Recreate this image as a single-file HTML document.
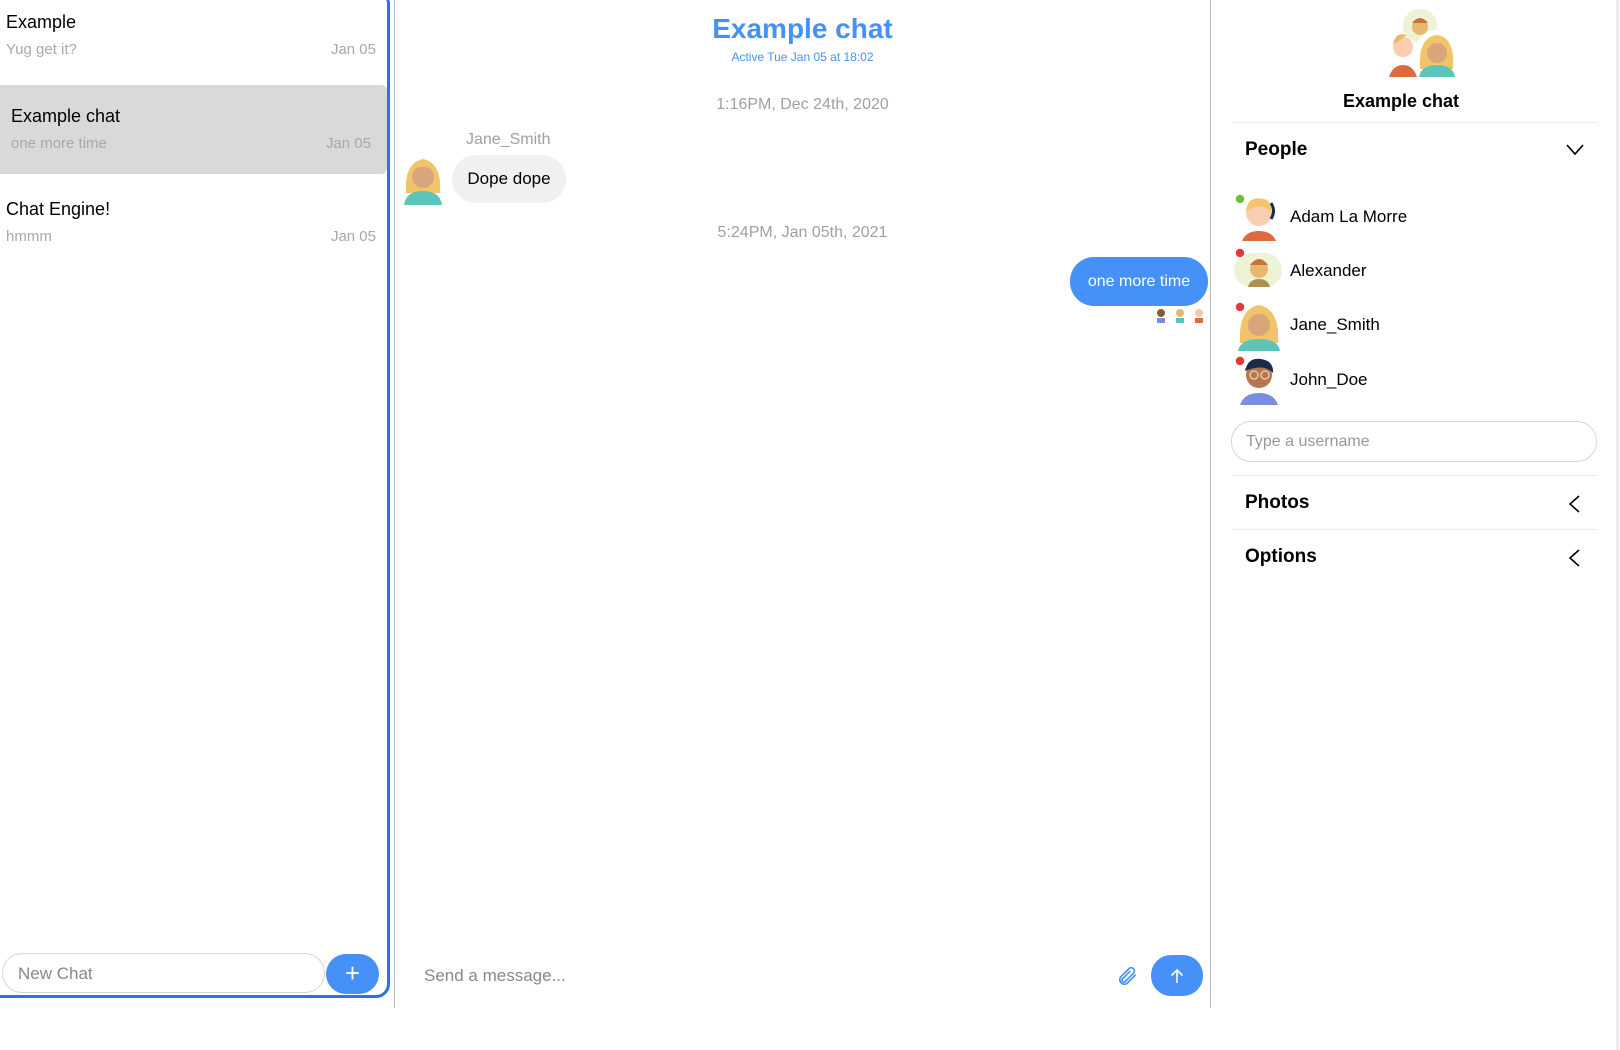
<!DOCTYPE html>
<html><head><meta charset="utf-8"><style>
*{margin:0;padding:0;box-sizing:border-box}
body{width:1620px;height:1050px;background:#fff;font-family:"Liberation Sans",sans-serif;position:relative;overflow:hidden;color:#000}
.a{position:absolute;white-space:nowrap}
.t{font-size:18px;line-height:20px}
.s{font-size:15px;color:#a8a8a8;line-height:18px}
.name{font-size:17px;line-height:20px}
.hdr{font-size:19px;font-weight:bold;line-height:22px}
</style></head><body>
<div class="a" style="left:-10px;top:-10px;width:400px;height:1008px;border:3px solid #2f6ff5;border-radius:0 14px 14px 0;"></div>
<div class="a t" style="left:6px;top:12px">Example</div>
<div class="a s" style="left:6px;top:41px">Yug get it?</div>
<div class="a s" style="right:1244px;top:41px">Jan 05</div>
<div class="a" style="left:0;top:85px;width:387px;height:89px;background:#d9d9d9;border-radius:0 6px 6px 0"></div>
<div class="a t" style="left:11px;top:106px">Example chat</div>
<div class="a s" style="left:11px;top:135px">one more time</div>
<div class="a s" style="right:1249px;top:135px">Jan 05</div>
<div class="a t" style="left:6px;top:199px">Chat Engine!</div>
<div class="a s" style="left:6px;top:228px">hmmm</div>
<div class="a s" style="right:1244px;top:228px">Jan 05</div>
<div class="a" style="left:2px;top:953px;width:323px;height:40px;border:1px solid #d6d6d6;border-radius:20px;font-size:17px;color:#888;padding:10px 15px">New Chat</div>
<div class="a" style="left:326px;top:954px;width:53px;height:40px;background:#4591f7;border-radius:20px;color:#fff;font-size:26px;line-height:38px;text-align:center;font-weight:300">+</div>
<div class="a" style="left:394px;top:0;width:1px;height:1008px;background:#bdbdbd"></div>
<div class="a" style="left:1210px;top:0;width:1px;height:1008px;background:#bdbdbd"></div>
<div class="a" style="left:1616px;top:0;width:3px;height:1050px;background:#ececec"></div>
<div class="a" style="left:395px;width:815px;top:12px;text-align:center;font-size:28px;font-weight:bold;color:#4591f7;line-height:34px">Example chat</div>
<div class="a" style="left:395px;width:815px;top:50px;text-align:center;font-size:12px;color:#4591f7">Active Tue Jan 05 at 18:02</div>
<div class="a" style="left:395px;width:815px;top:96px;text-align:center;font-size:16px;color:#a0a0a0">1:16PM, Dec 24th, 2020</div>
<div class="a" style="left:466px;top:131px;font-size:16px;color:#a0a0a0">Jane_Smith</div>
<svg class="a" style="left:400px;top:153px" width="46" height="52" viewBox="0 0 46 52"><path d="M6 40 Q4 10 23 6 Q42 10 40 40 Z" fill="#f1c46a"/><circle cx="23" cy="24" r="11" fill="#d9a57a"/><path d="M4 52 Q6 38 23 38 Q40 38 42 52Z" fill="#5cc4b8"/><path d="M12 16 Q23 6 34 16 Q23 12 12 16Z" fill="#f1c46a"/></svg>
<div class="a" style="left:452px;top:155px;width:114px;height:48px;background:#f0f0f0;border-radius:24px;font-size:17px;line-height:48px;text-align:center">Dope dope</div>
<div class="a" style="left:395px;width:815px;top:224px;text-align:center;font-size:16px;color:#a0a0a0">5:24PM, Jan 05th, 2021</div>
<div class="a" style="left:1070px;top:257px;width:138px;height:49px;background:#4591f7;border-radius:24px;font-size:16px;line-height:49px;text-align:center;color:#fff">one more time</div>
<svg class="a" style="left:1153px;top:307px" width="56" height="16"><circle cx="8" cy="6" r="4" fill="#8b5a3c"/><rect x="4" y="11" width="8" height="5" fill="#7a8ee0"/><circle cx="27" cy="6" r="4" fill="#e8b870"/><rect x="23" y="11" width="8" height="5" fill="#5cc4b8"/><circle cx="46" cy="6" r="4" fill="#f5c9a8"/><rect x="42" y="11" width="8" height="5" fill="#e06a40"/></svg>
<div class="a" style="left:424px;top:966px;font-size:17px;color:#888">Send a message...</div>
<svg class="a" style="left:1117px;top:965px" width="22" height="22" viewBox="0 0 24 24" fill="none" stroke="#4591f7" stroke-width="1.8" stroke-linecap="round"><path d="M20 11 L11 20 a5 5 0 0 1 -7 -7 L13 4 a3.5 3.5 0 0 1 5 5 L9 18 a2 2 0 0 1 -3 -3 L14 7"/></svg>
<div class="a" style="left:1151px;top:955px;width:52px;height:41px;background:#4591f7;border-radius:20px"></div>
<svg class="a" style="left:1168px;top:967px" width="18" height="18" viewBox="0 0 18 18" stroke="#fff" stroke-width="1.6" fill="none"><path d="M9 16V3M3.5 8.5 9 3l5.5 5.5"/></svg>
<svg class="a" style="left:1385px;top:9px" width="76" height="70" viewBox="0 0 76 70"><circle cx="35" cy="17" r="17" fill="#eef3d6"/><circle cx="35" cy="18" r="8" fill="#e8b870"/><path d="M27 14 Q35 4 43 14Z" fill="#c87438"/><circle cx="18" cy="38" r="10" fill="#f7cfb0"/><path d="M8 36 Q10 22 22 26 Z" fill="#e8b870"/><path d="M4 68 Q8 56 18 56 Q28 56 32 68Z" fill="#e06a40"/><circle cx="52" cy="43" r="22" fill="#fff"/><path d="M35 60 Q33 28 52 26 Q70 28 68 60Z" fill="#f1c46a"/><circle cx="52" cy="44" r="10" fill="#d9a57a"/><path d="M34 68 Q36 56 52 56 Q68 56 70 68Z" fill="#5cc4b8"/></svg>
<div class="a" style="left:1301px;width:200px;top:91px;text-align:center;font-size:18px;font-weight:bold">Example chat</div>
<div class="a" style="left:1232px;top:122px;width:365px;height:1px;background:#ececec"></div>
<div class="a hdr" style="left:1245px;top:139px">People</div>
<svg class="a" style="left:1566px;top:144px" width="18" height="12"><path d="M1 1 9 10 17 1" stroke="#000" stroke-width="1.6" fill="none"/></svg>
<svg class="a" style="left:1234px;top:191px" width="50" height="50" viewBox="0 0 50 50"><circle cx="25" cy="22" r="13" fill="#f7cfb0"/><path d="M12 20 Q14 4 30 8 Q38 10 37 22 Q30 10 12 20Z" fill="#f1c46a"/><path d="M37 12 Q42 20 37 28" stroke="#1e2a4a" stroke-width="3" fill="none"/><path d="M8 50 Q12 40 25 40 Q38 40 42 50Z" fill="#e06a40"/><circle cx="6" cy="8" r="5" fill="#6fbf3a" stroke="#fff" stroke-width="1.5"/></svg>
<div class="a name" style="left:1290px;top:207px">Adam La Morre</div>
<svg class="a" style="left:1234px;top:245px" width="50" height="50" viewBox="0 0 50 50"><rect x="0" y="8" width="48" height="34" rx="17" fill="#eef3d6"/><circle cx="25" cy="24" r="9" fill="#e8b870"/><path d="M16 20 Q25 8 34 20Z" fill="#c87438"/><path d="M14 42 Q16 34 25 34 Q34 34 36 42Z" fill="#b09050"/><circle cx="6" cy="8" r="5" fill="#e03a3a" stroke="#fff" stroke-width="1.5"/></svg>
<div class="a name" style="left:1290px;top:261px">Alexander</div>
<svg class="a" style="left:1234px;top:299px" width="50" height="52" viewBox="0 0 50 52"><path d="M6 44 Q4 10 25 6 Q46 10 44 44Z" fill="#f1c46a"/><circle cx="25" cy="26" r="11" fill="#d9a57a"/><path d="M4 52 Q6 40 25 40 Q44 40 46 52Z" fill="#5cc4b8"/><circle cx="6" cy="8" r="5" fill="#e03a3a" stroke="#fff" stroke-width="1.5"/></svg>
<div class="a name" style="left:1290px;top:315px">Jane_Smith</div>
<svg class="a" style="left:1234px;top:353px" width="50" height="52" viewBox="0 0 50 52"><circle cx="25" cy="22" r="13" fill="#b5784e"/><path d="M11 18 Q14 4 27 6 Q40 8 39 20 Q30 10 11 18Z" fill="#1e2a4a"/><circle cx="20" cy="22" r="4" fill="none" stroke="#f0d0b0" stroke-width="1.3"/><circle cx="31" cy="22" r="4" fill="none" stroke="#f0d0b0" stroke-width="1.3"/><path d="M6 52 Q10 40 25 40 Q40 40 44 52Z" fill="#7a8ee0"/><circle cx="6" cy="8" r="5" fill="#e03a3a" stroke="#fff" stroke-width="1.5"/></svg>
<div class="a name" style="left:1290px;top:370px">John_Doe</div>
<div class="a" style="left:1231px;top:421px;width:366px;height:41px;border:1px solid #d6d6d6;border-radius:20px;font-size:16px;color:#999;padding:11px 14px">Type a username</div>
<div class="a" style="left:1232px;top:475px;width:365px;height:1px;background:#ececec"></div>
<div class="a hdr" style="left:1245px;top:492px">Photos</div>
<svg class="a" style="left:1568px;top:495px" width="12" height="18"><path d="M11 1 2 9 11 17" stroke="#000" stroke-width="1.6" fill="none"/></svg>
<div class="a" style="left:1232px;top:529px;width:365px;height:1px;background:#ececec"></div>
<div class="a hdr" style="left:1245px;top:546px">Options</div>
<svg class="a" style="left:1568px;top:549px" width="12" height="18"><path d="M11 1 2 9 11 17" stroke="#000" stroke-width="1.6" fill="none"/></svg>
</body></html>
